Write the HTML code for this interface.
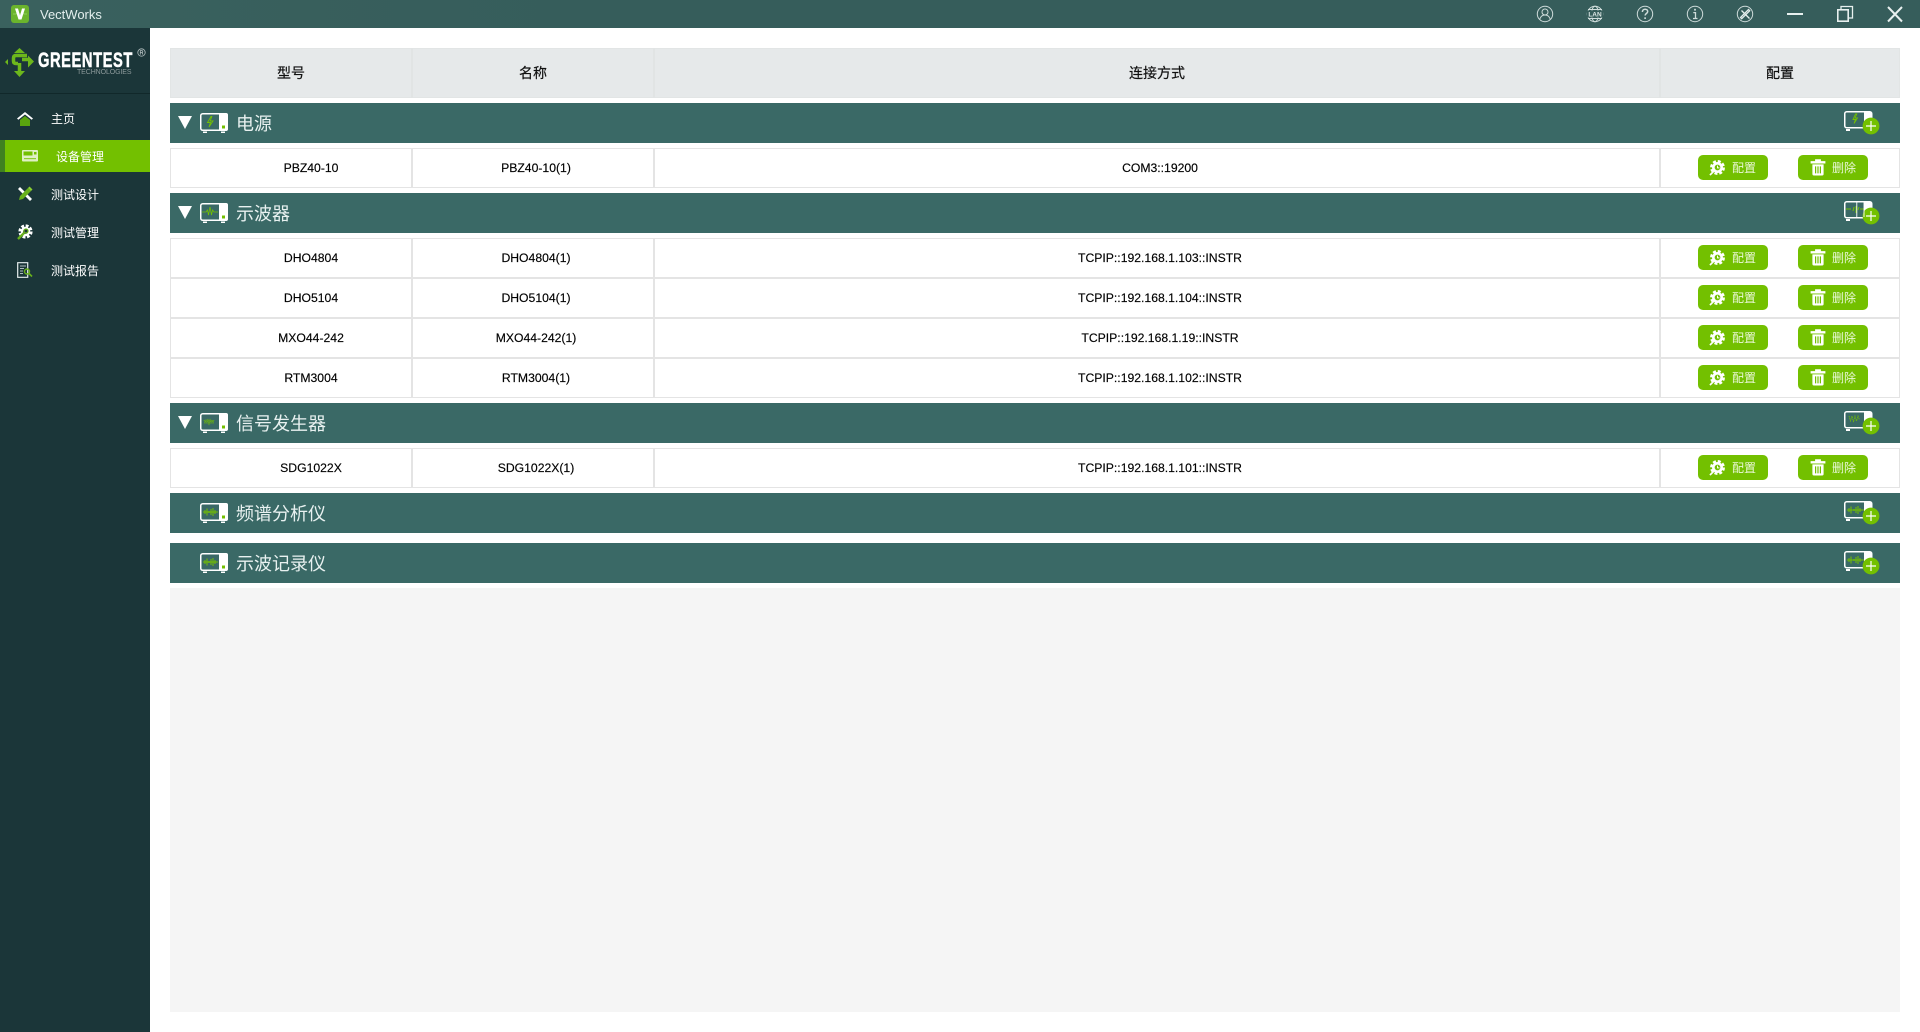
<!DOCTYPE html>
<html lang="zh"><head><meta charset="utf-8"><title>VectWorks</title>
<style>
*{box-sizing:border-box;margin:0;padding:0}
html,body{width:1920px;height:1032px;overflow:hidden;background:#fff}
body{position:relative;font-family:"Liberation Sans","Noto Sans CJK SC",sans-serif;color:#111}
.a{position:absolute}
#top{left:0;top:0;width:1920px;height:28px;background:linear-gradient(90deg,#3a615e,#365d5b 30%,#365d5b)}
#side{left:0;top:28px;width:150px;height:1004px;background:#1b3639}
.m{position:absolute;font-size:12px;line-height:16px;color:#fff;white-space:nowrap}
.hd{position:absolute;left:170px;top:48px;width:1730px;height:50px;background:#e6e9ea;border:1px solid #e2e5e5}
.vh{position:absolute;top:48px;height:50px;width:2px;background:#e1e4e4}
.hd-t{position:absolute;top:48px;height:50px;line-height:51px;font-size:14px;transform:translateX(-50%);color:#111;white-space:nowrap;-webkit-text-stroke:.2px #111}
.sec{position:absolute;left:170px;width:1730px;height:40px;background:#3a6966}
.sec b{position:absolute;left:66px;top:1px;line-height:40px;font-size:18px;font-weight:400;color:#e8f1f0;white-space:nowrap}
.row{position:absolute;left:170px;width:1730px;height:40px;border:1px solid #e4e4e4;background:#fff}
.row i{position:absolute;top:0;height:38px;width:2px;background:#e4e4e4}
.row span{position:absolute;top:0;line-height:38px;font-size:12.2px;transform:translateX(-50%);white-space:nowrap;color:#000;-webkit-text-stroke:.15px #000}
.btn{position:absolute;top:6px;width:70px;height:25px;border-radius:5px;background:#73c000;color:#eaf8d8;font-size:12px;line-height:27px}
.btn em{position:absolute;left:34px;top:0;font-style:normal;white-space:nowrap}
.btn svg{position:absolute;left:11px;top:4px}
.btn svg.tr{top:3px;width:18px;height:18px}
svg{display:block;overflow:visible}
.u{position:absolute}
</style></head><body>

<svg width="0" height="0" style="position:absolute">
<defs>
<symbol id="dev" viewBox="0 0 28 20" overflow="visible">
<rect x=".75" y=".75" width="26.5" height="16.5" rx="2" fill="none" stroke="#fff" stroke-width="1.5"/>
<path d="M19 0h7a2 2 0 0 1 2 2v14a2 2 0 0 1-2 2h-7z" fill="#fff"/>
<rect x="22" y="12.5" width="3" height="3" fill="#73c000"/>
<rect x="3" y="18.5" width="4" height="1.5" fill="#fff"/><rect x="21" y="18.5" width="4" height="1.5" fill="#fff"/>
</symbol>
<symbol id="add" viewBox="0 0 36 26" overflow="visible">
<path d="M20 1h6a2 2 0 0 1 2 2v12h-8z" fill="#fff"/>
<rect x=".75" y=".75" width="27" height="16" rx="2" fill="none" stroke="#fff" stroke-width="1.5"/>
<rect x="2" y="18" width="4" height="2" fill="#fff"/>
<circle cx="27" cy="15" r="8.4" fill="#73c000"/>
<path d="M22 15h10M27 10v10" stroke="#fff" stroke-width="1.2"/>
</symbol>
<symbol id="gear" viewBox="0 0 18 18" overflow="visible">
<circle cx="9" cy="9" r="6.6" fill="none" stroke="#fff" stroke-width="2.6" stroke-dasharray="3.2 2"/>
<circle cx="9" cy="9" r="5.8" fill="#fff"/>
<circle cx="9" cy="9" r="3" fill="#73c000"/>
<path d="M9 7v2.4h2" stroke="#fff" stroke-width="1" fill="none"/>
<path d="M1 17l4-4" stroke="#fff" stroke-width="1.8"/>
</symbol>
<symbol id="trash" viewBox="0 0 18 18" overflow="visible">
<path d="M2 3.500h14v1.600H2zM6.500 3.500V1.700h5v1.800" fill="#fff" stroke="#fff" stroke-width=".8"/>
<path d="M3.400 6.400h11.200v9.600a1.500 1.500 0 0 1-1.500 1.500H4.900a1.500 1.500 0 0 1-1.500-1.500z" fill="#fff"/>
<path d="M6.600 8.400v7M9 8.400v7M11.400 8.400v7" stroke="#73c000" stroke-width="1.200"/>
</symbol>
</defs>
</svg>

<div class="a" id="top"></div>
<svg class="u" style="left:11px;top:5px" width="18" height="18" viewBox="0 0 18 18">
<rect width="18" height="18" rx="3" fill="#6bb42c"/>
<path d="M2 9h3l1-1 1 1h4l1-1 1 1h3" stroke="#8dcb5a" stroke-width="1" fill="none"/>
<path d="M4 3.500h3L9 10.500l2-7h3L10.500 14.500h-3z" fill="#fff"/>
</svg>
<div class="a" style="left:40px;top:7px;font-size:13px;line-height:16px;color:#e4efee">VectWorks</div>

<svg class="u" style="left:1535px;top:4px" width="20" height="20" viewBox="0 0 20 20" fill="none" stroke="#cfdcdb" stroke-width="1">
<circle cx="10" cy="10" r="7.700"/><circle cx="10" cy="8" r="3"/><path d="M4.700 15.500c.8-3 2.800-4.500 5.300-4.500s4.500 1.500 5.300 4.500"/>
</svg>
<svg class="u" style="left:1585px;top:4px" width="20" height="20" viewBox="0 0 20 20" fill="none" stroke="#cfdcdb" stroke-width="1">
<circle cx="10" cy="10" r="7.700"/><ellipse cx="10" cy="10" rx="3.500" ry="7.700"/><path d="M3 5.500h14M3 14.500h14"/>
<rect x="2" y="6.500" width="16" height="7" fill="#365d5b" stroke="none"/>
<text x="10" y="12.400" text-anchor="middle" font-size="6.500" font-weight="700" fill="#dbe5e4" stroke="none" font-family="Liberation Sans">LAN</text>
</svg>
<svg class="u" style="left:1635px;top:4px" width="20" height="20" viewBox="0 0 20 20" fill="none" stroke="#cfdcdb" stroke-width="1">
<circle cx="10" cy="10" r="7.700"/><path d="M7.400 8c0-1.800 1.200-2.800 2.700-2.800s2.600 1 2.600 2.300c0 2-2.600 2-2.600 4" stroke-width="1.500"/><path d="M10.100 13.300v1.700" stroke-width="1.600"/>
</svg>
<svg class="u" style="left:1685px;top:4px" width="20" height="20" viewBox="0 0 20 20" fill="none" stroke="#cfdcdb" stroke-width="1">
<circle cx="10" cy="10" r="7.700"/><path d="M10 4.800v1.800" stroke-width="1.800"/><path d="M8.300 8.600h2.200v5.600M8 14.500h4.500" stroke-width="1.300"/>
</svg>
<svg class="u" style="left:1735px;top:4px" width="20" height="20" viewBox="0 0 20 20" fill="none" stroke="#cfdcdb" stroke-width="1">
<circle cx="10" cy="10" r="7.700"/><path d="M6.500 6.500l8 8M13.500 5.500l1.200 1.200-8 8-1.200-1.200z" stroke="#e6efee" stroke-width="1.300"/>
</svg>
<svg class="u" style="left:1780px;top:0" width="130" height="28" viewBox="0 0 130 28" fill="none" stroke="#e8f0ef">
<path d="M7 14h16" stroke-width="2"/>
<path d="M61 9V6.500h11.500V18H69" stroke-width="1.300"/><rect x="57.800" y="9.800" width="10.400" height="11.400" stroke-width="1.600"/>
<path d="M108 7l14 14.500M122 7l-14 14.500" stroke-width="2"/>
</svg>

<div class="a" id="side"></div>
<div class="a" style="left:0;top:93px;width:150px;height:1px;background:#11282a"></div>
<svg class="u" style="left:0;top:44px" width="38" height="36" viewBox="0 44 38 36" fill="#6db71c">
<path d="M19.500 48l5.500 5H14zM14 71h11l-5.500 6zM5 62l3-3v6zM34 61.500l-6-6v12z"/>
<g fill="none" stroke="#6db71c" stroke-width="3.500">
<path d="M27 55.500H16Q13.500 55.500 13.500 58v3q0 2.500 2.500 2.500h2"/>
<path d="M19.500 63v8"/>
<path d="M22 59.500h6"/>
</g>
</svg>
<div class="a" style="left:38px;top:50px;font-size:21px;line-height:22px;font-weight:700;color:#fff;transform:scaleX(.70);transform-origin:0 0;white-space:nowrap;letter-spacing:.8px;-webkit-text-stroke:.5px #fff">GREENTEST</div>
<div class="a" style="left:77px;top:69px;font-size:7px;line-height:8px;color:#8d9a9b;white-space:nowrap;letter-spacing:-.1px">TECHNOLOGIES</div>
<svg class="u" style="left:137px;top:48px" width="9" height="9" viewBox="0 0 9 9" fill="none" stroke="#b5c0c0" stroke-width=".8"><circle cx="4.500" cy="4.500" r="3.700"/><path d="M3.300 6.600v-4h1.500c1.300 0 1.300 2 0 2H3.300M5 4.600l1 2"/></svg>

<svg class="u" style="left:17px;top:111px" width="16" height="16" viewBox="0 0 16 16">
<path d="M0 7.500L8 1l8 6.500-1.300 1.200L8 3.500 1.300 8.700z" fill="#fff"/><path d="M3 9l5-4 5 4v6H3z" fill="#5aa50f"/>
</svg>
<div class="m" style="left:51px;top:111px">主页</div>

<div class="a" style="left:0;top:140px;width:5px;height:32px;background:#3f8120"></div>
<div class="a" style="left:5px;top:140px;width:145px;height:32px;background:#73c000"></div>
<svg class="u" style="left:22px;top:150px" width="16" height="13" viewBox="0 0 16 13">
<rect width="16" height="11.500" rx="1" fill="#dff0c4"/><rect x="1.500" y="1.500" width="9" height="4" fill="#73c000"/><rect x="12" y="2" width="2.500" height="2.500" fill="#73c000"/><rect x="2" y="8" width="12" height="1.200" fill="#8fcc33"/>
</svg>
<div class="m" style="left:56px;top:149px">设备管理</div>

<svg class="u" style="left:17px;top:186px" width="16" height="16" viewBox="0 0 16 16">
<path d="M1 3l2-2 12 12-2 2z" fill="#fff"/><path d="M2 14l1-4 8-8 3 3-8 8z" fill="#68b11b"/><path d="M11 2l1.500-1.500 3 3L14 5z" fill="#8bd032"/>
</svg>
<div class="m" style="left:51px;top:187px">测试设计</div>

<svg class="u" style="left:17px;top:224px" width="16" height="16" viewBox="0 0 16 16">
<circle cx="8.500" cy="7.500" r="5.600" fill="none" stroke="#fff" stroke-width="3" stroke-dasharray="2.800 1.600"/><circle cx="8.500" cy="7.500" r="4.700" fill="#fff"/><circle cx="8.500" cy="7.500" r="2.400" fill="#1b3639"/>
<path d="M1 15l6-6" stroke="#68b11b" stroke-width="2.400"/><circle cx="9" cy="7" r="2" fill="none" stroke="#68b11b" stroke-width="1.200"/>
</svg>
<div class="m" style="left:51px;top:225px">测试管理</div>

<svg class="u" style="left:17px;top:262px" width="16" height="16" viewBox="0 0 16 16" fill="none">
<path d="M.7.700h10v14.600H.7z" stroke="#e6eeee" stroke-width="1.200"/>
<path d="M3 4h6M3 6.500h4M3 9h3M3 11.500h3" stroke="#aebcbc" stroke-width="1"/>
<circle cx="10" cy="9.500" r="2.500" stroke="#68b11b" stroke-width="1.400"/><path d="M12 11.500l3 3" stroke="#68b11b" stroke-width="1.600"/>
</svg>
<div class="m" style="left:51px;top:263px">测试报告</div>

<div class="hd"></div>
<div class="vh" style="left:411px"></div><div class="vh" style="left:653px"></div><div class="vh" style="left:1659px"></div>
<div class="hd-t" style="left:291px">型号</div>
<div class="hd-t" style="left:533px">名称</div>
<div class="hd-t" style="left:1157px">连接方式</div>
<div class="hd-t" style="left:1780px">配置</div>

<!-- 电源 -->
<div class="sec" style="top:103px"><b>电源</b>
<svg class="u" style="left:8px;top:13px" width="14" height="13" viewBox="0 0 14 13"><path d="M0 0h14L7 13z" fill="#fff"/></svg>
<svg class="u" style="left:30px;top:10px" width="28" height="20"><use href="#dev"/><path d="M11 3.500L7.500 9.500h3L9 14l4-6h-2.800L11.800 3.500z" fill="none" stroke="#73c000" stroke-width=".9"/></svg>
<svg class="u" style="left:1674px;top:8px" width="36" height="26"><use href="#add"/><path d="M11.500 3L9 8.500h2.500L10 12.500l3.500-5.500H11l1.800-4z" fill="none" stroke="#73c000" stroke-width=".9"/></svg>
</div>
<div class="row" style="top:148px"><i style="left:240px"></i><i style="left:482px"></i><i style="left:1488px"></i>
<span style="left:140px">PBZ40-10</span><span style="left:365px">PBZ40-10(1)</span><span style="left:989px">COM3::19200</span>
<div class="btn" style="left:1527px"><svg width="17" height="17"><use href="#gear"/></svg><em>配置</em></div>
<div class="btn" style="left:1627px"><svg class="tr"><use href="#trash"/></svg><em>删除</em></div></div>

<!-- 示波器 -->
<div class="sec" style="top:193px"><b>示波器</b>
<svg class="u" style="left:8px;top:13px" width="14" height="13" viewBox="0 0 14 13"><path d="M0 0h14L7 13z" fill="#fff"/></svg>
<svg class="u" style="left:30px;top:10px" width="28" height="20"><use href="#dev"/><path d="M2 9h4l1.500-2 1 5 1.500-8 1.500 8 1-5 1.500 2h4" fill="none" stroke="#73c000" stroke-width=".8"/></svg>
<svg class="u" style="left:1674px;top:8px" width="36" height="26"><use href="#add"/><path d="M2 8h5M9 10l1-4M12 5v7M14 9l1-3M16 8h4" fill="none" stroke="#73c000" stroke-width="1"/><path d="M12.800 1v15M20 1v15" stroke="#fff" stroke-width=".9"/></svg>
</div>
<div class="row" style="top:238px"><i style="left:240px"></i><i style="left:482px"></i><i style="left:1488px"></i>
<span style="left:140px">DHO4804</span><span style="left:365px">DHO4804(1)</span><span style="left:989px">TCPIP::192.168.1.103::INSTR</span>
<div class="btn" style="left:1527px"><svg width="17" height="17"><use href="#gear"/></svg><em>配置</em></div>
<div class="btn" style="left:1627px"><svg class="tr"><use href="#trash"/></svg><em>删除</em></div></div>
<div class="row" style="top:278px"><i style="left:240px"></i><i style="left:482px"></i><i style="left:1488px"></i>
<span style="left:140px">DHO5104</span><span style="left:365px">DHO5104(1)</span><span style="left:989px">TCPIP::192.168.1.104::INSTR</span>
<div class="btn" style="left:1527px"><svg width="17" height="17"><use href="#gear"/></svg><em>配置</em></div>
<div class="btn" style="left:1627px"><svg class="tr"><use href="#trash"/></svg><em>删除</em></div></div>
<div class="row" style="top:318px"><i style="left:240px"></i><i style="left:482px"></i><i style="left:1488px"></i>
<span style="left:140px">MXO44-242</span><span style="left:365px">MXO44-242(1)</span><span style="left:989px">TCPIP::192.168.1.19::INSTR</span>
<div class="btn" style="left:1527px"><svg width="17" height="17"><use href="#gear"/></svg><em>配置</em></div>
<div class="btn" style="left:1627px"><svg class="tr"><use href="#trash"/></svg><em>删除</em></div></div>
<div class="row" style="top:358px"><i style="left:240px"></i><i style="left:482px"></i><i style="left:1488px"></i>
<span style="left:140px">RTM3004</span><span style="left:365px">RTM3004(1)</span><span style="left:989px">TCPIP::192.168.1.102::INSTR</span>
<div class="btn" style="left:1527px"><svg width="17" height="17"><use href="#gear"/></svg><em>配置</em></div>
<div class="btn" style="left:1627px"><svg class="tr"><use href="#trash"/></svg><em>删除</em></div></div>

<!-- 信号发生器 -->
<div class="sec" style="top:403px"><b>信号发生器</b>
<svg class="u" style="left:8px;top:13px" width="14" height="13" viewBox="0 0 14 13"><path d="M0 0h14L7 13z" fill="#fff"/></svg>
<svg class="u" style="left:30px;top:10px" width="28" height="20"><use href="#dev"/><path d="M4 7l1 3 1-3 1 3 1-4 1 6 1-6 1 4 1-3 1 3 1-3" fill="none" stroke="#73c000" stroke-width=".8" stroke-dasharray="1.500 .6"/></svg>
<svg class="u" style="left:1674px;top:8px" width="36" height="26"><use href="#add"/><path d="M5 5l1.500 5 1.500-5 1.500 6 1.500-6 1.500 5 1.500-5 1.500 4" fill="none" stroke="#73c000" stroke-width=".8" stroke-dasharray="1.500 .7"/></svg>
</div>
<div class="row" style="top:448px"><i style="left:240px"></i><i style="left:482px"></i><i style="left:1488px"></i>
<span style="left:140px">SDG1022X</span><span style="left:365px">SDG1022X(1)</span><span style="left:989px">TCPIP::192.168.1.101::INSTR</span>
<div class="btn" style="left:1527px"><svg width="17" height="17"><use href="#gear"/></svg><em>配置</em></div>
<div class="btn" style="left:1627px"><svg class="tr"><use href="#trash"/></svg><em>删除</em></div></div>

<!-- 频谱分析仪 -->
<div class="sec" style="top:493px"><b>频谱分析仪</b>
<svg class="u" style="left:30px;top:10px" width="28" height="20"><use href="#dev"/><path d="M3 9h15M5 7v4M7 5.500v7M9 8v2M11 6v6M13 5v8M15 7v4" fill="none" stroke="#73c000" stroke-width="1"/></svg>
<svg class="u" style="left:1674px;top:8px" width="36" height="26"><use href="#add"/><path d="M3 9h17M5 7v4M7 5.500v7M10 8v2M12 6v6M14 5v8M16 7v4" fill="none" stroke="#73c000" stroke-width="1"/></svg>
</div>

<!-- 示波记录仪 -->
<div class="sec" style="top:543px"><b>示波记录仪</b>
<svg class="u" style="left:30px;top:10px" width="28" height="20"><use href="#dev"/><path d="M3 9h15M5 7v4M7 5.500v7M9 8v2M11 6v6M13 5v8M15 7v4" fill="none" stroke="#73c000" stroke-width="1"/></svg>
<svg class="u" style="left:1674px;top:8px" width="36" height="26"><use href="#add"/><path d="M3 9h17M5 7v4M7 5.500v7M10 8v2M12 6v6M14 5v8M16 7v4" fill="none" stroke="#73c000" stroke-width="1"/></svg>
</div>

<div class="a" style="left:170px;top:588px;width:1730px;height:424px;background:#f5f5f5"></div>
</body></html>
